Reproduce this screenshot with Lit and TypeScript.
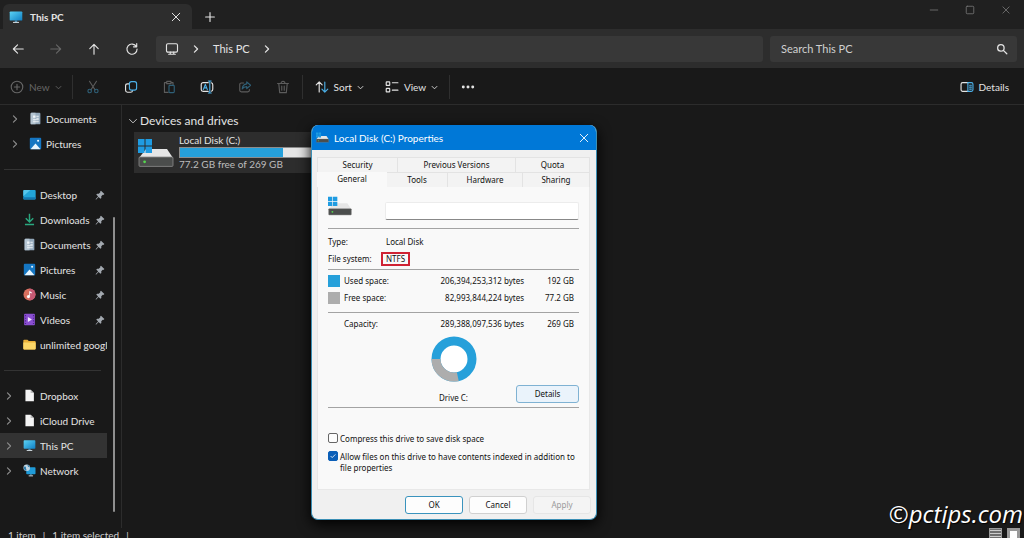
import { LitElement, html, svg, css } from "lit";
import { customElement, property } from "lit/decorators.js";

const shapes: Record<string, [string, unknown]> = {
  back: ["0 0 16 16", svg`<g class="s"><path d="M14 8H3M7.5 3.2 2.7 8l4.8 4.8"/></g>`],
  forward: ["0 0 16 16", svg`<g class="s"><path d="M2 8h11M8.5 3.2 13.3 8l-4.8 4.8"/></g>`],
  up: ["0 0 16 16", svg`<g class="s"><path d="M8 14V3M3.2 7.5 8 2.7l4.8 4.8"/></g>`],
  refresh: ["0 0 16 16", svg`<g class="s"><path d="M13 5.2A5.8 5.8 0 1 0 13.8 8M13.4 1.8v3.7H9.7"/></g>`],
  plus: ["0 0 16 16", svg`<g class="s"><path d="M8 3v10M3 8h10"/></g>`],
  close: ["0 0 16 16", svg`<g class="s"><path d="m3 3 10 10M13 3 3 13"/></g>`],
  min: ["0 0 16 16", svg`<g class="s"><path d="M2 8h12"/></g>`],
  max: ["0 0 16 16", svg`<g class="s"><rect x="2" y="2" width="12" height="12" rx="1.5"/></g>`],
  right: ["0 0 16 16", svg`<g class="s"><path d="m5.5 3 5 5-5 5"/></g>`],
  down: ["0 0 16 16", svg`<g class="s"><path d="m2.5 5.5 5.5 5.5 5.5-5.5"/></g>`],
  search: ["0 0 16 16", svg`<g class="s"><circle cx="6.5" cy="6.5" r="4.3"/><path d="m9.8 9.8 4.6 4.6"/></g>`],
  monitor: ["0 0 16 16", svg`<g class="s"><rect x="1.7" y="2" width="12.6" height="9.6" rx="1.6"/><path d="M6 11.6v2.2M10 11.6v2.2M4.2 14h7.6"/></g>`],
  add: ["0 0 16 16", svg`<g class="s"><circle cx="8" cy="8" r="6.6"/><path d="M8 5v6M5 8h6"/></g>`],
  cut: ["0 0 16 16", svg`<g class="s"><path d="m4 1.5 6.3 9.6M12 1.5 5.7 11.1"/><g class="b"><circle cx="4.2" cy="12.6" r="2"/><circle cx="11.8" cy="12.6" r="2"/></g></g>`],
  copy: ["0 0 16 16", svg`<g class="s"><path d="M5.4 4.5H4A2.2 2.2 0 0 0 1.8 6.7v5.1A2.2 2.2 0 0 0 4 14h3.6a2.2 2.2 0 0 0 2.2-2"/><rect class="b" x="6.2" y="1.8" width="8.2" height="9.8" rx="2.4"/></g>`],
  paste: ["0 0 16 16", svg`<g class="s"><path d="M7 14.2H2.8V3h2.4M10.2 3h2.4v2.2M5.4 1.6h4.8v2.6H5.4z"/><rect class="b" x="8" y="6.2" width="6" height="8.2" rx="1"/></g>`],
  rename: ["0 0 16 16", svg`<g class="s"><path d="M9.4 3H3.6A2.2 2.2 0 0 0 1.4 5.2v5.6A2.2 2.2 0 0 0 3.6 13h5.8M12.8 3.2a2.2 2.2 0 0 1 1.8 2.2v5.2a2.2 2.2 0 0 1-1.8 2.2"/><g class="b"><path d="M11.2 1.4v13.2M9.6 1.2h3.2M9.6 14.8h3.2M3.8 11l2.3-6 2.3 6M4.6 9h3"/></g></g>`],
  share: ["0 0 16 16", svg`<g class="s"><path d="M6.4 3.4H3.8A1.8 1.8 0 0 0 2 5.2v6.6a1.8 1.8 0 0 0 1.8 1.8h7.4a1.8 1.8 0 0 0 1.8-1.8v-1"/><path class="b" d="M10 2.2 14.3 6 10 9.8V7.6c-2.4 0-4 .7-5.2 2.6.3-3.4 2-5.4 5.2-5.8z"/></g>`],
  trash: ["0 0 16 16", svg`<g class="s"><path d="M1.8 4h12.4M5.8 3.8c0-3 4.4-3 4.4 0M3.2 4.2l1 10.2h7.6l1-10.2M6.6 7v4.6M9.4 7v4.6"/></g>`],
  sort: ["0 0 16 16", svg`<g class="s"><path d="M4.8 13.6V2.4M1.4 5.6l3.4-3.4 3.4 3.4"/><path class="b" d="M11.2 2.4v11.2M7.9 10.4l3.3 3.4 3.4-3.4"/></g>`],
  view: ["0 0 16 16", svg`<g class="s"><rect x="1.4" y="2.2" width="4" height="4" rx=".6"/><rect x="1.4" y="9.6" width="4" height="4" rx=".6"/><path d="M8.4 3.2h6.4M8.4 11.6h6.4"/></g>`],
  dots: ["0 0 16 16", svg`<g fill="currentColor"><circle cx="2.6" cy="8" r="1.7"/><circle cx="8" cy="8" r="1.7"/><circle cx="13.4" cy="8" r="1.7"/></g>`],
  pane: ["0 0 16 16", svg`<g class="s"><path d="M9 13H3A1.8 1.8 0 0 1 1.2 11.2V4.8A1.8 1.8 0 0 1 3 3h6"/><path class="b" d="M9 3h4a1.8 1.8 0 0 1 1.8 1.8v6.4A1.8 1.8 0 0 1 13 13H9zM11 6h2M11 8.2h2M11 10.4h2"/></g>`],
  pin: ["0 0 16 16", svg`<path fill="#a3a9b0" d="m9.600 1 5.400 5.400-1.600 1.400-.9-.2-2.500 2.500.2 2.600-1.500 1.400-3-3L2 15l-1 .2.200-1L5 10.300l-3-3 1.400-1.500 2.600.2 2.500-2.500-.3-1z"/>`],
  pc: ["0 0 16 16", svg`<defs><linearGradient id="g" x1="0" y1="0" x2="1" y2="1"><stop offset="0" stop-color="#5cd3f5"/><stop offset="1" stop-color="#0f7fc4"/></linearGradient></defs><rect x=".8" y="1.600" width="14.400" height="10.400" rx="1" fill="url(#g)"/><path d="M6.600 12h2.800v1.800H6.600z" fill="#4a8fb2"/><path d="M4.600 13.600h6.800v1.200H4.600z" fill="#cfd8de"/>`],
  network: ["0 0 16 16", svg`<rect x="4" y="4" width="11.400" height="8.600" rx="1" fill="#1f9bd8"/><path d="M8.600 12.600h2.200v1.400H8.600z" fill="#4a8fb2"/><path d="M7 14h5.400v1.200H7z" fill="#cfd8de"/><circle cx="4.600" cy="4.600" r="4" fill="#c4d6e2"/><path d="M1.500 3.400c1.400-.6 2.400.4 2.200 1.600s1 1.800.4 3.200C2 8 .2 5.600 1.500 3.400zM5 1c1.400.6.4 1.800 1.400 2.400s1.600.4 2 1.200C8.400 2.600 6.800.8 5 1z" fill="#2b7dae"/>`],
  doc: ["0 0 16 16", svg`<rect x="2" y=".8" width="12" height="14.400" rx="1.200" fill="#93a8ba"/><path d="M2 2A1.200 1.200 0 0 1 3.200.8H8v14.400H3.200A1.200 1.200 0 0 1 2 14z" fill="#b4c4d1"/><path d="M5 4.200h3v2.800H5zM9 4.600h3v1.200H9zM9 7h3v1.200H9zM5 9h7v1.200H5zM5 11.400h7v1.200H5z" fill="#eff4f8"/>`],
  pic: ["0 0 16 16", svg`<rect x="1" y="1" width="14" height="14" rx="1.200" fill="#1576c2"/><path d="M1.800 15 8 8l6.200 7z" fill="#e8f5fd"/><circle cx="11.200" cy="4.600" r="1.300" fill="#e8f5fd"/>`],
  desktop: ["0 0 16 16", svg`<rect x=".4" y="2.400" width="15.200" height="11.600" rx="1.200" fill="#22a5d8"/><path d="M.4 10 9 2.400H1.600A1.200 1.200 0 0 0 .4 3.600z" fill="#55c6ec"/><path d="M.4 11.400h15.200v1.400a1.200 1.200 0 0 1-1.200 1.200H1.600a1.200 1.200 0 0 1-1.200-1.200z" fill="#1478b0"/>`],
  download: ["0 0 16 16", svg`<path d="M8 1v9.600M3.400 6.400 8 11l4.600-4.600M2.400 14.200h11.200" fill="none" stroke="#2aa87f" stroke-width="1.800"/>`],
  music: ["0 0 16 16", svg`<circle cx="8" cy="8" r="7.400" fill="#d9705f"/><path d="M8 .6a7.400 7.400 0 0 1 0 14.800z" fill="#c65a74"/><circle cx="6.700" cy="10.600" r="1.900" fill="#fff"/><path d="M7.700 10.600V3.600l3 1.700v1.500L8.700 5.800v4.800z" fill="#fff"/>`],
  video: ["0 0 16 16", svg`<rect x="1.400" y="1" width="13.200" height="14" rx="1" fill="#8a4fd0"/><path d="M2.400 2.600h1.400V4H2.400zm0 3.200h1.400v1.400H2.400zm0 3.200h1.400v1.400H2.400zm0 3.200h1.400v1.400H2.400zM12.200 2.600h1.400V4h-1.400zm0 3.200h1.400v1.400h-1.400zm0 3.200h1.400v1.400h-1.400zm0 3.200h1.400v1.400h-1.400z" fill="#4d1f92"/><path d="m6 4.800 5 3.200-5 3.200z" fill="#f1e6ff"/>`],
  folder: ["0 0 16 16", svg`<path d="M.4 3.200c0-.7.4-1.200 1.100-1.200h4l1.600 1.600h7.400c.7 0 1.100.5 1.100 1.100V13c0 .7-.4 1.200-1.100 1.200h-13c-.7 0-1.100-.5-1.100-1.200z" fill="#e8b03a"/><path d="M.4 5.600h15.200V13c0 .7-.4 1.200-1.100 1.200h-13c-.7 0-1.100-.5-1.100-1.200z" fill="#fbd668"/>`],
  file: ["0 0 16 16", svg`<path d="M3 .8h6.400L13.400 5v10.200H3z" fill="#f4f4f4"/><path d="M9.400.8V5h4z" fill="#bcbcbc"/>`],
  disk: ["0 0 36 30", svg`<path d="M8 11h21l6 9H1z" fill="#e6e6e6"/><rect x="1" y="19" width="34" height="9.400" rx="1" fill="#4b4d4c" stroke="#8b8b8b" stroke-width=".8"/><circle cx="6.600" cy="23.800" r="1.400" fill="#55d84e"/><path d="M0 1h6.500v6.500H0zM7.500 1H14v6.500H7.500zM0 8.500h6.500V15H0zM7.500 8.500H14V15H7.500z" fill="#1f9ce2"/>`],
};

@customElement("ui-icon")
class UiIcon extends LitElement {
  @property() name = "";
  static styles = css`
    :host { display: inline-flex; flex: none; width: 14px; height: 14px; }
    svg { width: 100%; height: 100%; display: block; }
    .s { fill: none; stroke: currentColor; stroke-width: var(--stroke, 1.3); stroke-linecap: round; stroke-linejoin: round; }
    .b { stroke: var(--accent, currentColor); }
  `;
  render() {
    const [box, body] = shapes[this.name];
    return html`<svg viewBox=${box} aria-hidden="true">${body}</svg>`;
  }
}

@customElement("nav-tree")
class NavTree extends LitElement {
  static styles = css`
    :host { display: flex; width: 122px; box-sizing: border-box; border-right: 1px solid #2c2c2c; color: #e4e4e4; }
    .lists { width: 107px; padding-top: 1px; }
    ul { list-style: none; margin: 0; padding: 0; }
    a { display: flex; align-items: center; height: 25px; padding-left: 4px; color: inherit; text-decoration: none; white-space: nowrap; overflow: hidden; }
    .deep a { padding-left: 10px; }
    .sel { background: #333; }
    .chev { width: 10px; height: 10px; color: #8d8d8d; --stroke: 1.8; margin-right: 9px; }
    .gap { width: 10px; margin-right: 9px; flex: none; }
    .ico { width: 13px; height: 13px; margin-right: 4px; }
    .name { flex: 1; overflow: hidden; }
    .pin { width: 10px; height: 10px; margin-right: 2px; }
    hr { border: 0; height: 1px; background: #333; margin: 13px 6px 12px 4px; }
    .bar { width: 2px; margin: 112px 0 16px 6px; background: #8f8f8f; border-radius: 1px; }
  `;
  row(icon: string, name: string, o: { chev?: boolean; pin?: boolean; sel?: boolean } = {}) {
    return html`<li><a href="#" class=${o.sel ? "sel" : ""}>
      ${o.chev ? html`<ui-icon class="chev" name="right"></ui-icon>` : html`<span class="gap"></span>`}
      <ui-icon class="ico" name=${icon}></ui-icon><span class="name">${name}</span>
      ${o.pin ? html`<ui-icon class="pin" name="pin"></ui-icon>` : ""}</a></li>`;
  }
  render() {
    const c = { chev: true };
    const p = { pin: true };
    return html`<div class="lists">
      <ul class="deep">${this.row("doc", "Documents", c)}${this.row("pic", "Pictures", c)}</ul>
      <hr>
      <ul>${this.row("desktop", "Desktop", p)}${this.row("download", "Downloads", p)}${this.row("doc", "Documents", p)}${this.row("pic", "Pictures", p)}${this.row("music", "Music", p)}${this.row("video", "Videos", p)}${this.row("folder", "unlimited google")}</ul>
      <hr>
      <ul>${this.row("file", "Dropbox", c)}${this.row("file", "iCloud Drive", c)}${this.row("pc", "This PC", { chev: true, sel: true })}${this.row("network", "Network", c)}</ul>
    </div><div class="bar"></div>`;
  }
}

@customElement("disk-properties")
class DiskProperties extends LitElement {
  static styles = css`
    :host { display: flex; flex-direction: column; box-sizing: border-box; border: 1px solid #3b8fb5; border-top: 0; border-radius: 7px; overflow: hidden; background: #f0f0f0; color: #111; font: 8px/12px "Noto Sans", "Open Sans", sans-serif; box-shadow: 0 4px 14px #000; }
    header { display: flex; align-items: center; height: 25px; padding: 0 4px; background: #0078d7; color: #fff; font: 10px/14px Lato, "Open Sans", sans-serif; }
    h2 { flex: 1; margin: 0 0 0 5px; font: inherit; }
    .hico { width: 13px; height: 11px; }
    header button { width: 16px; height: 16px; padding: 2px; border: 0; background: none; color: inherit; }
    header ui-icon { --stroke: 1.2; }
    header button ui-icon { width: 12px; height: 12px; }
    .body { padding: 7px 6px 6px 5px; }
    .tabs { display: grid; }
    .one { grid-template-columns: 81px 118px 1fr; }
    .two { grid-template-columns: 70px 61px 75px 1fr; }
    .tabs button { height: 15px; padding: 0; font: inherit; color: inherit; background: #f3f3f3; border: 1px solid #e3e3e3; border-width: 1px 1px 0 0; }
    .tabs button:first-child { border-left-width: 1px; }
    .two .on { background: #f9f9f9; border-color: #f9f9f9; padding-bottom: 4px; }
    .page { background: #f9f9f9; border: 1px solid #e8e8e8; border-top: 0; padding: 9px 10px 9px 10px; }
    .top { display: flex; align-items: flex-start; justify-content: space-between; height: 24px; margin-bottom: 8px; }
    .drive { width: 24px; height: 20px; }
    .label { align-self: flex-end; box-sizing: border-box; width: 194px; height: 18px; border: 1px solid #ececec; border-bottom-color: #888; border-radius: 2px; background: #fff; padding: 0 4px; font: inherit; }
    hr { border: 0; height: 1px; background: #a3a3a3; margin: 0; }
    .facts { display: grid; grid-template-columns: 58px 1fr; margin: 4px 0 2px; line-height: 17px; }
    .facts dt, .facts dd { margin: 0; }
    .mark { display: inline-block; line-height: 10px; border: 2px solid #cf2233; padding: 0 3px; margin-left: -5px; }
    table { border-collapse: collapse; width: 100%; }
    td, th { padding: 0; height: 17px; font-weight: normal; text-align: left; }
    .num { text-align: right; }
    .size { width: 50px; padding-right: 5px; }
    .sw { width: 16px; }
    .sw i { display: block; width: 12px; height: 12px; }
    .used { background: #26a0da; }
    .free { background: #adadad; }
    .usage { margin: 2px 0 6px; }
    .cap { margin: 2px 0 4px; }
    .chart { display: grid; grid-template-columns: 1fr auto 1fr; align-items: end; padding-bottom: 3px; }
    figure { margin: 0; grid-column: 2; text-align: center; }
    figure svg { display: block; width: 46px; height: 46px; margin: 0 auto 10px; }
    .chart .btn { justify-self: end; width: 63px; margin-bottom: 1px; }
    .btn { box-sizing: border-box; height: 18px; padding: 0; font: inherit; color: #111; background: #fdfdfd; border: 1px solid #d0d0d0; border-radius: 3px; }
    .hot { background: #eaf3fb; border-color: #7fb2d3; }
    .ok { border-color: #3a93bd; }
    .checks { padding-top: 25px; }
    .check { display: flex; align-items: flex-start; gap: 2px; line-height: 11px; margin-bottom: 7px; }
    .check input { appearance: none; flex: none; box-sizing: border-box; width: 10px; height: 10px; margin: 0; border: 1px solid #666; border-radius: 2px; background: #fdfdfd; }
    .check input:checked { border-color: #0b5fb8; background: #0b5fb8 url('data:image/svg+xml,<svg xmlns="http://www.w3.org/2000/svg" viewBox="0 0 10 10"><path d="M2 5l2 2 4-4" fill="none" stroke="white"/></svg>'); }
    footer { display: flex; justify-content: flex-end; gap: 6px; padding: 0 5px 5px; }
    footer .btn { width: 58px; }
    .btn:disabled { color: #9a9a9a; background: #f4f4f4; border-color: #e6e6e6; }
  `;
  render() {
    return html`<header><ui-icon class="hico" name="disk"></ui-icon><h2>Local Disk (C:) Properties</h2>
        <button aria-label="Close"><ui-icon name="close"></ui-icon></button></header>
      <div class="body">
        <div class="tabs one"><button>Security</button><button>Previous Versions</button><button>Quota</button></div>
        <div class="tabs two"><button class="on">General</button><button>Tools</button><button>Hardware</button><button>Sharing</button></div>
        <div class="page">
          <div class="top"><ui-icon class="drive" name="disk"></ui-icon><input class="label" type="text" aria-label="Volume label"></div>
          <hr>
          <dl class="facts"><dt>Type:</dt><dd>Local Disk</dd><dt>File system:</dt><dd><span class="mark">NTFS</span></dd></dl>
          <hr>
          <table class="usage">
            <tr><td class="sw"><i class="used"></i></td><th scope="row">Used space:</th><td class="num">206,394,253,312 bytes</td><td class="num size">192 GB</td></tr>
            <tr><td class="sw"><i class="free"></i></td><th scope="row">Free space:</th><td class="num">82,993,844,224 bytes</td><td class="num size">77.2 GB</td></tr>
          </table>
          <hr>
          <table class="cap"><tr><td class="sw"></td><th scope="row">Capacity:</th><td class="num">289,388,097,536 bytes</td><td class="num size">269 GB</td></tr></table>
          <div class="chart">
            <figure><svg viewBox="0 0 46 46"><circle cx="23" cy="23" r="18" fill="#fff" stroke="#26a0da" stroke-width="9"/><path d="M5 23A18 18 0 0 0 26.800 40.600" fill="none" stroke="#adadad" stroke-width="9"/></svg><figcaption>Drive C:</figcaption></figure>
            <button class="btn hot">Details</button>
          </div>
          <hr>
          <div class="checks">
            <label class="check"><input type="checkbox"><span>Compress this drive to save disk space</span></label>
            <label class="check"><input type="checkbox" checked><span>Allow files on this drive to have contents indexed in addition to file properties</span></label>
          </div>
        </div>
      </div>
      <footer><button class="btn ok">OK</button><button class="btn">Cancel</button><button class="btn" disabled>Apply</button></footer>`;
  }
}

@customElement("app-root")
class AppRoot extends LitElement {
  static styles = css`
    :host { display: flex; flex-direction: column; position: relative; height: 100vh; overflow: hidden; background: #191919; color: #e4e4e4; font: 10px/14px Lato, "Open Sans", sans-serif; }
    button { border: 0; padding: 0; background: none; color: inherit; font: inherit; display: inline-flex; align-items: center; justify-content: center; }
    .titlebar { display: flex; height: 29px; background: #202020; padding-left: 3px; }
    .tab { display: flex; align-items: center; box-sizing: border-box; width: 189px; height: 25px; margin-top: 4px; padding: 0 10px 0 6px; background: #2d2d2d; border-radius: 6px 6px 0 0; font-weight: 700; }
    .tab span { flex: 1; margin-left: 7px; }
    .tab button ui-icon { width: 12px; height: 12px; }
    .new { width: 36px; padding-top: 5px; }
    .win { display: flex; margin-left: auto; color: #777; height: 20px; }
    .win button { width: 36px; }
    .win ui-icon { width: 10px; height: 10px; }
    .nav { display: flex; align-items: center; height: 39px; background: #2d2d2d; padding-right: 7px; }
    .icons { display: flex; gap: 2px; }
    .icons button { width: 36px; height: 25px; }
    .dim { color: #666; }
    .icons .grey { color: #5c5c5c; --accent: #2f6078; }
    .crumbs, .search { display: flex; align-items: center; box-sizing: border-box; height: 26px; background: #383838; border-radius: 3px; font-size: 11px; }
    .crumbs { flex: 1; margin: 0 7px 0 6px; padding-left: 9px; }
    .crumbs .sep { width: 10px; height: 10px; --stroke: 2; }
    .crumbs button { margin: 0 12px; }
    .crumbs .first { margin-left: 12px; }
    .search { width: 247px; padding: 0 9px 0 11px; }
    .search input { flex: 1; min-width: 0; border: 0; padding: 0; background: none; outline: 0; color: #d0d0d0; font: inherit; }
    .search input::placeholder { color: #d0d0d0; }
    .search ui-icon { width: 12px; height: 12px; --stroke: 1.7; }
    .tools { display: flex; align-items: center; box-sizing: border-box; height: 37px; border-bottom: 1px solid #2c2c2c; padding: 2px 15px 0 10px; --accent: #4cb0e8; }
    .tools .text { gap: 5px; }
    .tools .caret { width: 7px; height: 7px; --stroke: 2; }
    .line { width: 1px; height: 24px; background: #2f2f2f; }
    .newbtn { color: #666; margin-right: 10px; }
    .tools .icons { margin: 0 1px 0 2px; }
    .sort { margin: 0 21px 0 12px; }
    .view { margin-right: 11px; }
    .more { width: 35px; }
    .details { margin-left: auto; }
    .main { display: flex; flex: 1; min-height: 0; }
    .files { flex: 1; padding: 8px 0 0 6px; }
    h1 { display: flex; align-items: center; gap: 2px; margin: 0; font: 12px/16px Lato, "Open Sans", sans-serif; }
    h1 ui-icon { width: 10px; height: 10px; }
    .tile { display: flex; align-items: center; box-sizing: border-box; gap: 5px; width: 190px; height: 41px; margin: 3px 0 0 6px; padding-left: 4px; background: #2d2d2d; }
    .tile ui-icon { width: 36px; height: 30px; }
    .tile > div { flex: 1; line-height: 13px; }
    .meter { box-sizing: border-box; height: 11px; border: 1px solid #8d8d8d; background: #e6e6e6; }
    .fill { height: 100%; background: #26a0da; }
    .free { color: #bdbdbd; }
    .status { display: flex; justify-content: space-between; height: 10px; overflow: hidden; padding: 0 4px 0 8px; color: #cfcfcf; }
    .status .left { display: flex; gap: 7px; }
    .modes { display: flex; gap: 5px; }
    .modes i { box-sizing: border-box; width: 13px; height: 13px; border: 1px solid #9a9a9a; background: repeating-linear-gradient(#6e6e6e 0 1px, #ccc 1px 2px, #6e6e6e 2px 3px); }
    .modes .large { background: #fff; border: 3px solid #999; }
    .dialog { position: absolute; left: 311px; top: 125px; width: 286px; }
    .credit { position: absolute; right: 1px; bottom: 10px; color: #fff; font: italic 24px/28px "Open Sans", "Noto Sans", sans-serif; text-shadow: 1px 1px 1px #000; }
  `;
  render() {
    const b = (icon: string, label: string, cls = "") => html`<button class=${cls} aria-label=${label}><ui-icon name=${icon}></ui-icon></button>`;
    return html`
      <div class="titlebar">
        <div class="tab"><ui-icon name="pc"></ui-icon><span>This PC</span>${b("close", "Close tab")}</div>
        ${b("plus", "New tab", "new")}
        <div class="win">${b("min", "Minimize")}${b("max", "Maximize")}${b("close", "Close")}</div>
      </div>
      <nav class="nav">
        <div class="icons">${b("back", "Back")}${b("forward", "Forward", "dim")}${b("up", "Up")}${b("refresh", "Refresh")}</div>
        <div class="crumbs"><ui-icon name="monitor"></ui-icon><ui-icon class="sep first" name="right"></ui-icon><button>This PC</button><ui-icon class="sep" name="right"></ui-icon></div>
        <label class="search"><input type="text" placeholder="Search This PC" aria-label="Search This PC"><ui-icon name="search"></ui-icon></label>
      </nav>
      <div class="tools">
        <button class="text newbtn"><ui-icon name="add"></ui-icon>New<ui-icon class="caret" name="down"></ui-icon></button>
        <div class="line"></div>
        <div class="icons">${b("cut", "Cut", "grey")}${b("copy", "Copy")}${b("paste", "Paste", "grey")}${b("rename", "Rename")}${b("share", "Share", "grey")}${b("trash", "Delete", "grey")}</div>
        <div class="line"></div>
        <button class="text sort"><ui-icon name="sort"></ui-icon>Sort<ui-icon class="caret" name="down"></ui-icon></button>
        <button class="text view"><ui-icon name="view"></ui-icon>View<ui-icon class="caret" name="down"></ui-icon></button>
        <div class="line"></div>
        ${b("dots", "More", "more")}
        <button class="text details"><ui-icon name="pane"></ui-icon>Details</button>
      </div>
      <div class="main">
        <nav-tree></nav-tree>
        <div class="files">
          <h1><ui-icon name="down"></ui-icon>Devices and drives</h1>
          <div class="tile"><ui-icon name="disk"></ui-icon>
            <div><div>Local Disk (C:)</div><div class="meter"><div class="fill" style="width: 72%"></div></div><div class="free">77.2 GB free of 269 GB</div></div>
          </div>
        </div>
      </div>
      <div class="status"><div class="left"><span>1 item</span><span>|</span><span>1 item selected</span><span>|</span></div><div class="modes"><i></i><i class="large"></i></div></div>
      <disk-properties class="dialog" role="dialog" aria-label="Local Disk (C:) Properties"></disk-properties>
      <div class="credit">©pctips.com</div>`;
  }
}
